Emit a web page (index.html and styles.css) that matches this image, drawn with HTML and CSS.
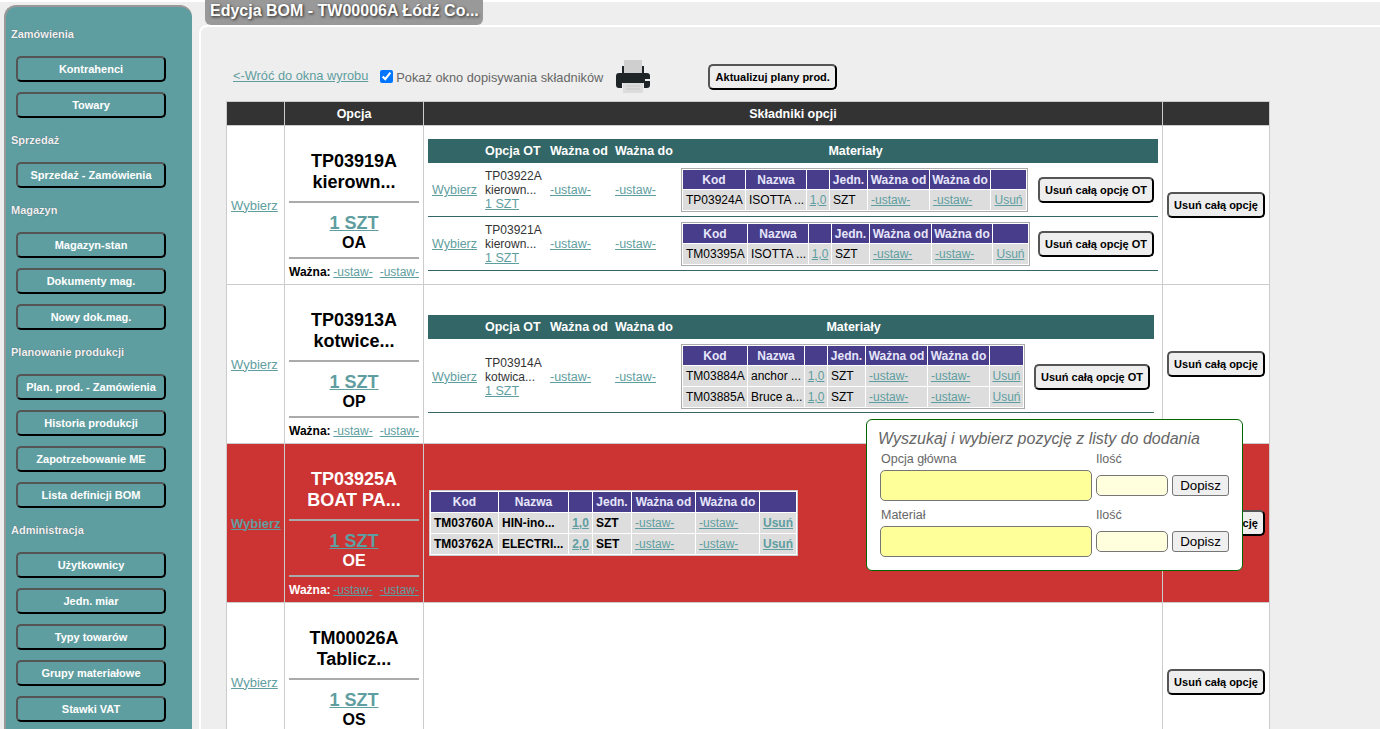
FILE: index.html
```html
<!DOCTYPE html>
<html lang="pl">
<head>
<meta charset="utf-8">
<title>Edycja BOM</title>
<link rel="stylesheet" href="styles.css">
</head>
<body>
<div class="shell">
  <nav class="sidebar">
    <div class="nav-label">Zamówienia</div>
    <button class="nav-btn">Kontrahenci</button>
    <button class="nav-btn">Towary</button>
    <div class="nav-label">Sprzedaż</div>
    <button class="nav-btn">Sprzedaż - Zamówienia</button>
    <div class="nav-label">Magazyn</div>
    <button class="nav-btn">Magazyn-stan</button>
    <button class="nav-btn">Dokumenty mag.</button>
    <button class="nav-btn">Nowy dok.mag.</button>
    <div class="nav-label">Planowanie produkcji</div>
    <button class="nav-btn">Plan. prod. - Zamówienia</button>
    <button class="nav-btn">Historia produkcji</button>
    <button class="nav-btn">Zapotrzebowanie ME</button>
    <button class="nav-btn">Lista definicji BOM</button>
    <div class="nav-label">Administracja</div>
    <button class="nav-btn">Użytkownicy</button>
    <button class="nav-btn">Jedn. miar</button>
    <button class="nav-btn">Typy towarów</button>
    <button class="nav-btn">Grupy materiałowe</button>
    <button class="nav-btn">Stawki VAT</button>
  </nav>
  <main class="content">
    <h1 class="page-title">Edycja BOM - TW00006A Łódź Co...</h1>
    <div class="panel">
      <div class="toolbar">
        <a class="back-link" href="#">&lt;-Wróć do okna wyrobu</a>
        <label class="show-add"><input type="checkbox" checked><span>Pokaż okno dopisywania składników</span></label>
        <svg class="printer" viewBox="0 0 34 33" width="34" height="33" aria-hidden="true">
          <rect x="8" y="0" width="18" height="14" fill="#cfcfcf"/>
          <path d="M6 6h2v7h18V6h2v7h3a3 3 0 0 1 3 3v9a3 3 0 0 1-3 3h-3v-5H6v5H3a3 3 0 0 1-3-3v-9a3 3 0 0 1 3-3h3z" fill="#1f2526"/>
          <rect x="29" y="19" width="5" height="2" fill="#eee"/>
          <rect x="7" y="23" width="20" height="10" fill="#dcdcdc"/>
          <path d="M10 26h14M10 29h14" stroke="#c8c8c8" stroke-width="1"/>
        </svg>
        <button class="act-btn update-btn">Aktualizuj plany prod.</button>
      </div>
      <table class="bom">
        <colgroup><col class="c-pick"><col class="c-opt"><col class="c-parts"><col class="c-del"></colgroup>
        <thead>
          <tr><th></th><th>Opcja</th><th>Składniki opcji</th><th></th></tr>
        </thead>
        <tbody>
          <tr>
            <td class="pick"><a href="#">Wybierz</a></td>
            <td class="opt">
              <div class="opt-name">TP03919A<br>kierown...</div>
              <hr>
              <a class="opt-qty" href="#">1 SZT</a>
              <div class="opt-code">OA</div>
              <hr>
              <div class="opt-valid"><b>Ważna:</b><a href="#">-ustaw-</a><a href="#">-ustaw-</a></div>
            </td>
            <td class="parts">
              <table class="ot ot-wide">
                <thead><tr><th></th><th>Opcja OT</th><th>Ważna od</th><th>Ważna do</th><th class="mat-head">Materiały</th><th></th></tr></thead>
                <tbody>
                  <tr>
                    <td><a href="#">Wybierz</a></td>
                    <td>TP03922A<br>kierown...<br><a href="#">1 SZT</a></td>
                    <td><a href="#">-ustaw-</a></td>
                    <td><a href="#">-ustaw-</a></td>
                    <td>
                      <table class="mat mat-a">
                        <tr><th>Kod</th><th>Nazwa</th><th></th><th>Jedn.</th><th>Ważna od</th><th>Ważna do</th><th></th></tr>
                        <tr><td>TP03924A</td><td>ISOTTA ...</td><td class="mid"><a href="#">1,0</a></td><td>SZT</td><td><a href="#">-ustaw-</a></td><td><a href="#">-ustaw-</a></td><td class="mid"><a href="#">Usuń</a></td></tr>
                      </table>
                    </td>
                    <td><button class="act-btn">Usuń całą opcję OT</button></td>
                  </tr>
                  <tr>
                    <td><a href="#">Wybierz</a></td>
                    <td>TP03921A<br>kierown...<br><a href="#">1 SZT</a></td>
                    <td><a href="#">-ustaw-</a></td>
                    <td><a href="#">-ustaw-</a></td>
                    <td>
                      <table class="mat mat-b">
                        <tr><th>Kod</th><th>Nazwa</th><th></th><th>Jedn.</th><th>Ważna od</th><th>Ważna do</th><th></th></tr>
                        <tr><td>TM03395A</td><td>ISOTTA ...</td><td class="mid"><a href="#">1,0</a></td><td>SZT</td><td><a href="#">-ustaw-</a></td><td><a href="#">-ustaw-</a></td><td class="mid"><a href="#">Usuń</a></td></tr>
                      </table>
                    </td>
                    <td><button class="act-btn">Usuń całą opcję OT</button></td>
                  </tr>
                </tbody>
              </table>
            </td>
            <td class="del"><button class="act-btn">Usuń całą opcję</button></td>
          </tr>
          <tr>
            <td class="pick"><a href="#">Wybierz</a></td>
            <td class="opt">
              <div class="opt-name">TP03913A<br>kotwice...</div>
              <hr>
              <a class="opt-qty" href="#">1 SZT</a>
              <div class="opt-code">OP</div>
              <hr>
              <div class="opt-valid"><b>Ważna:</b><a href="#">-ustaw-</a><a href="#">-ustaw-</a></div>
            </td>
            <td class="parts">
              <table class="ot ot-narrow">
                <thead><tr><th></th><th>Opcja OT</th><th>Ważna od</th><th>Ważna do</th><th class="mat-head">Materiały</th><th></th></tr></thead>
                <tbody>
                  <tr>
                    <td><a href="#">Wybierz</a></td>
                    <td>TP03914A<br>kotwica...<br><a href="#">1 SZT</a></td>
                    <td><a href="#">-ustaw-</a></td>
                    <td><a href="#">-ustaw-</a></td>
                    <td>
                      <table class="mat mat-c">
                        <tr><th>Kod</th><th>Nazwa</th><th></th><th>Jedn.</th><th>Ważna od</th><th>Ważna do</th><th></th></tr>
                        <tr><td>TM03884A</td><td>anchor ...</td><td class="mid"><a href="#">1,0</a></td><td>SZT</td><td><a href="#">-ustaw-</a></td><td><a href="#">-ustaw-</a></td><td class="mid"><a href="#">Usuń</a></td></tr>
                        <tr><td>TM03885A</td><td>Bruce a...</td><td class="mid"><a href="#">1,0</a></td><td>SZT</td><td><a href="#">-ustaw-</a></td><td><a href="#">-ustaw-</a></td><td class="mid"><a href="#">Usuń</a></td></tr>
                      </table>
                    </td>
                    <td><button class="act-btn">Usuń całą opcję OT</button></td>
                  </tr>
                </tbody>
              </table>
            </td>
            <td class="del"><button class="act-btn">Usuń całą opcję</button></td>
          </tr>
          <tr class="active">
            <td class="pick"><a href="#">Wybierz</a></td>
            <td class="opt">
              <div class="opt-name">TP03925A<br>BOAT PA...</div>
              <hr>
              <a class="opt-qty" href="#">1 SZT</a>
              <div class="opt-code">OE</div>
              <hr>
              <div class="opt-valid"><b>Ważna:</b><a href="#">-ustaw-</a><a href="#">-ustaw-</a></div>
            </td>
            <td class="parts">
              <table class="mat mat-d">
                <tr><th>Kod</th><th>Nazwa</th><th></th><th>Jedn.</th><th>Ważna od</th><th>Ważna do</th><th></th></tr>
                <tr><td>TM03760A</td><td>HIN-ino...</td><td class="mid strong"><a href="#">1,0</a></td><td>SZT</td><td><a href="#">-ustaw-</a></td><td><a href="#">-ustaw-</a></td><td class="mid strong"><a href="#">Usuń</a></td></tr>
                <tr><td>TM03762A</td><td>ELECTRI...</td><td class="mid strong"><a href="#">2,0</a></td><td>SET</td><td><a href="#">-ustaw-</a></td><td><a href="#">-ustaw-</a></td><td class="mid strong"><a href="#">Usuń</a></td></tr>
              </table>
            </td>
            <td class="del"><button class="act-btn">Usuń całą opcję</button></td>
          </tr>
          <tr>
            <td class="pick"><a href="#">Wybierz</a></td>
            <td class="opt">
              <div class="opt-name">TM00026A<br>Tablicz...</div>
              <hr>
              <a class="opt-qty" href="#">1 SZT</a>
              <div class="opt-code">OS</div>
              <hr>
              <div class="opt-valid"><b>Ważna:</b><a href="#">-ustaw-</a><a href="#">-ustaw-</a></div>
            </td>
            <td class="parts"></td>
            <td class="del"><button class="act-btn">Usuń całą opcję</button></td>
          </tr>
        </tbody>
      </table>
    </div>
  </main>
</div>
<form class="add-popup">
  <div class="add-title">Wyszukaj i wybierz pozycję z listy do dodania</div>
  <div class="add-grid">
    <label class="add-label">Opcja główna</label>
    <label class="add-label add-label-qty">Ilość</label>
    <span></span>
    <input class="add-search" type="text">
    <input class="add-qty" type="text">
    <button class="add-btn" type="button">Dopisz</button>
    <label class="add-label add-label-next">Materiał</label>
    <label class="add-label add-label-next add-label-qty">Ilość</label>
    <span></span>
    <input class="add-search" type="text">
    <input class="add-qty" type="text">
    <button class="add-btn" type="button">Dopisz</button>
  </div>
</form>
</body>
</html>
```

FILE: styles.css
```css
* { box-sizing: border-box; }

html {
  background: linear-gradient(#fff 2px, #eee 2px);
  height: 100%;
}

body {
  margin: 0;
  height: 729px;
  overflow: hidden;
  position: relative;
  font-family: "Liberation Sans", Arial, sans-serif;
  font-size: 12px;
  color: #333;
}

a { color: #5f9ea0; text-decoration: underline; }

.shell { display: flex; height: 729px; }

/* Sidebar */
.sidebar {
  flex: 0 0 188px;
  margin: 5px 0 -60px 4px;
  padding: 5px 0 0 5px;
  background: #5f9ea0;
  border-top: 2px solid #999;
  border-left: 2px solid #999;
  border-radius: 12px 12px 0 0;
  min-height: 800px;
}

.nav-label {
  height: 14px;
  line-height: 14px;
  margin: 15px 0;
  font-size: 11px;
  font-weight: bold;
  color: #f2f2f2;
  text-shadow: 0 0 1px #456;
}

.nav-btn {
  display: block;
  width: 150px;
  height: 26px;
  margin: 0 0 10px 5px;
  padding: 0;
  background: #5f9ea0;
  color: #fff;
  font: bold 11px "Liberation Sans", Arial, sans-serif;
  border: 2px solid;
  border-color: #555 #000 #000 #555;
  border-radius: 5px;
}

/* Content column */
.content { flex: 1 1 auto; min-width: 0; margin-left: 7px; }

.page-title {
  display: inline-block;
  vertical-align: top;
  width: 278px;
  height: 25px;
  margin: 0 0 0 6px;
  padding: 0 0 0 5px;
  background: #999;
  border-radius: 0 0 6px 6px;
  color: #fff;
  font-size: 16px;
  font-weight: bold;
  line-height: 22px;
  white-space: nowrap;
  text-shadow: 1px 1px 3px #222;
}

.panel {
  height: 800px;
  margin-right: -4px;
  padding: 33px 0 0 25px;
  border: 2px solid #fff;
  border-radius: 8px 0 0 0;
  background: #eee;
}

.toolbar { display: flex; align-items: center; height: 33px; margin-bottom: 8px; }

.back-link { margin: 0 0 2px 7px; font-size: 12.8px; }

.show-add { display: flex; align-items: center; margin-left: 12px; font-size: 12.8px; color: #666; }
.show-add input { width: 13px; height: 13px; margin: 0 3px 0 0; accent-color: #0075ff; }
.show-add span { margin-top: 2px; }

.printer { margin-left: 13px; flex: none; }

.act-btn {
  height: 26px;
  padding: 0 5px;
  background: #eee;
  color: #000;
  font: bold 11px "Liberation Sans", Arial, sans-serif;
  white-space: nowrap;
  border: 2px solid;
  border-color: #555 #000 #000 #555;
  border-radius: 5px;
}

.update-btn { width: 129px; margin: 1px 0 0 58px; }

/* Main BOM table */
.bom {
  table-layout: fixed;
  width: 1044px;
  border-collapse: collapse;
  background: #fff;
  border: 1px solid #ccc;
}

.c-pick { width: 58px; }
.c-opt { width: 139px; }
.c-parts { width: 739px; }
.c-del { width: 107px; }

.bom > thead th {
  height: 24px;
  padding: 0;
  background: #333;
  color: #fff;
  font-size: 12.5px;
  font-weight: bold;
  border: 1px solid #ccc;
}

.bom > tbody > tr { height: 159px; }

.bom > tbody > tr > td {
  padding: 0;
  vertical-align: middle;
  border: 1px solid #ccc;
}

.bom > tbody > tr > td.pick { padding-left: 4px; font-size: 13px; }
.del { text-align: center; }
.del .act-btn { width: 98px; padding: 0; }

.bom > tbody > tr > td.opt {
  padding: 0 4px 5px;
  vertical-align: bottom;
  text-align: center;
  color: #000;
}

.opt-name { font-size: 18px; font-weight: bold; line-height: 21px; }

.opt hr { height: 2px; margin: 8px 0 10px; border: 0; background: #aaa; }
.opt .opt-code + hr { margin: 5px 0 6px; }

.opt-qty { display: block; font-size: 18px; font-weight: bold; line-height: 21px; }

.opt-code { margin-top: -1px; font-size: 16px; font-weight: bold; line-height: 19px; }

.opt-valid { display: flex; line-height: 14px; white-space: nowrap; }
.opt-valid b { margin-right: auto; }
.opt-valid a + a { margin-left: 7px; }

.bom > tbody > tr > td.parts { padding: 0 4px; }

/* Nested OT table */
.ot { table-layout: fixed; border-collapse: separate; border-spacing: 0; color: #333; }
.ot-wide { width: 730px; }
.ot-narrow { width: 726px; }

.ot > thead th {
  height: 24px;
  padding: 0 0 0 4px;
  background: #366;
  color: #fff;
  font-size: 12.5px;
  font-weight: bold;
  text-align: left;
  white-space: nowrap;
}

.ot > thead th:nth-child(1) { width: 53px; }
.ot > thead th:nth-child(2) { width: 65px; }
.ot > thead th:nth-child(3) { width: 65px; }
.ot > thead th:nth-child(4) { width: 66px; }
.ot-wide > thead th:nth-child(5) { width: 357px; }
.ot-narrow > thead th:nth-child(5) { width: 353px; }
.ot > thead th:nth-child(6) { width: 124px; }
.ot > thead th.mat-head { text-align: center; padding: 0; }

.ot > tbody > tr > td {
  padding: 5px 0 4px 4px;
  line-height: 14px;
  white-space: nowrap;
  border-bottom: 1px solid #366;
  vertical-align: middle;
}

.ot-narrow > tbody > tr > td { padding-bottom: 3px; }

.ot > tbody > tr > td > a { font-size: 12.5px; }

.ot .act-btn { width: 116px; padding: 0; }

/* Materials table */
.mat {
  table-layout: fixed;
  border-collapse: separate;
  border-spacing: 1px;
  background: #fff;
  border: 1px solid #aaa;
  color: #000;
}

.mat th {
  height: 19px;
  padding: 0;
  background: #483d8b;
  color: #e6e6fa;
  font-size: 12px;
  font-weight: bold;
  text-align: center;
  white-space: nowrap;
}

.mat td {
  height: 20px;
  padding: 0 0 0 3px;
  background: #ddd;
  line-height: 14px;
  white-space: nowrap;
}

.mat td.mid { padding: 0; text-align: center; }

.mat-a { width: 347px; }
.mat-b { width: 349px; }
.mat-c { width: 344px; }
.mat-d { width: 369px; margin-left: 1px; }

.mat-d th { height: 20px; }
.mat-d td { font-weight: bold; }
.mat-d td a { font-weight: normal; }
.mat-d td.strong a { font-weight: bold; }

.mat-a th:nth-child(1) { width: 62px; }
.mat-b th:nth-child(1), .mat-c th:nth-child(1) { width: 64px; }
.mat-d th:nth-child(1) { width: 67px; }
.mat-a th:nth-child(2), .mat-b th:nth-child(2) { width: 60px; }
.mat-c th:nth-child(2) { width: 56px; }
.mat-d th:nth-child(2) { width: 69px; }
.mat th:nth-child(3) { width: 22px; }
.mat-d th:nth-child(3) { width: 23px; }
.mat th:nth-child(4) { width: 37px; }
.mat-d th:nth-child(4) { width: 38px; }
.mat th:nth-child(5) { width: 61px; }
.mat-d th:nth-child(5) { width: 63px; }
.mat-a th:nth-child(6), .mat-b th:nth-child(6) { width: 60px; }
.mat-c th:nth-child(6) { width: 61px; }
.mat-d th:nth-child(6) { width: 63px; }
.mat-a th:nth-child(7), .mat-b th:nth-child(7) { width: 35px; }
.mat-c th:nth-child(7) { width: 33px; }
.mat-d th:nth-child(7) { width: 36px; }

/* Active (red) row */
.bom > tbody > tr.active > td { background: #c33; color: #fff; }
.active .pick a { font-weight: bold; }
.active .mat { border-color: #ccc; }

/* Add popup */
.add-popup {
  position: absolute;
  left: 866px;
  top: 419px;
  width: 377px;
  height: 152px;
  padding: 9px 0 0 11px;
  background: #fff;
  border: 1px solid #060;
  border-radius: 6px;
  color: #666;
}

.add-title { font-size: 16px; font-style: italic; line-height: 19px; }

.add-grid {
  display: grid;
  grid-template-columns: 212px 72px 57px;
  column-gap: 4px;
  align-items: center;
  margin-left: 2px;
}

.add-label { height: 15px; line-height: 15px; margin: 4px 0 0 1px; font-size: 12.5px; }
.add-label-qty { margin-left: 0; }
.add-label-next { margin-top: 7px; }

.add-search {
  height: 31px;
  margin-top: 3px;
  background: #ff9;
  border: 1px solid #777;
  border-radius: 5px;
}

.add-qty {
  width: 72px;
  height: 21px;
  margin-top: 3px;
  background: #ffd;
  border: 1px solid #777;
  border-radius: 5px;
}

.add-btn {
  height: 21px;
  margin-top: 3px;
  padding: 0;
  background: #efefef;
  color: #000;
  font: 13.33px "Liberation Sans", Arial, sans-serif;
  border: 1px solid #767676;
  border-radius: 3px;
}
```
